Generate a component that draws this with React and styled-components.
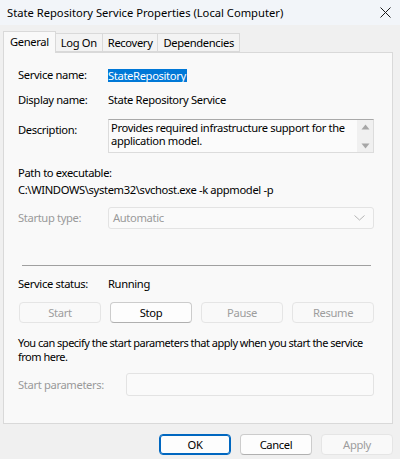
import React from 'react'
import styled, { createGlobalStyle } from 'styled-components'

const Global = createGlobalStyle`
  html, body { margin: 0; padding: 0; }
  body {
    background: #f0f0f0;
    font-family: "Noto Sans", "Open Sans", sans-serif;
    font-size: 11.2px;
    letter-spacing: -0.35px;
    color: #000;
  }
  * { box-sizing: border-box; }
`

const Window = styled.div`
  width: 400px;
  height: 459px;
  display: flex;
  flex-direction: column;
  background: #f0f0f0;
  overflow: hidden;
`

const TitleBar = styled.div`
  height: 25px;
  display: flex;
  align-items: center;
  justify-content: space-between;
  padding: 0 8px 0 7px;
  background: #f2f5f9;
  font-size: 11.2px;
  letter-spacing: 0;
`

const Close = styled.div`
  width: 14px;
  height: 14px;
  display: flex;
  align-items: center;
  justify-content: center;
`

const Body = styled.div`
  flex: 1;
  display: flex;
  flex-direction: column;
  padding: 6px 7px 0 3px;
`

const Tabs = styled.div`
  display: flex;
  align-items: flex-end;
  height: 21px;
  position: relative;
  z-index: 1;
`

const Tab = styled.div`
  height: ${p => (p.$active ? '22px' : '19px')};
  margin-bottom: ${p => (p.$active ? '-1px' : '0')};
  padding: 0 ${p => (p.$active ? '6px' : '5px')};
  padding-bottom: ${p => (p.$active ? '3px' : '0')};
  display: flex;
  align-items: center;
  border: 1px solid #d9d9d9;
  border-bottom: ${p => (p.$active ? 'none' : '1px solid #d9d9d9')};
  border-left: ${p => (p.$first || p.$active ? '1px solid #d9d9d9' : 'none')};
  background: ${p => (p.$active ? '#f9f9f9' : '#f3f3f3')};
`

const Panel = styled.div`
  height: 372px;
  border: 1px solid #d9d9d9;
  background: #f9f9f9;
  padding: 14px 18px 0 14px;
  display: flex;
  flex-direction: column;
`

const Row = styled.div`
  display: grid;
  grid-template-columns: ${p => p.$label || '90px'} 1fr;
  align-items: ${p => (p.$top ? 'start' : 'center')};
  margin-top: ${p => p.$mt || 0}px;
  line-height: 16px;
  min-height: 16px;
`

const Label = styled.div`
  color: ${p => (p.$dim ? '#9a9a9a' : '#000')};
  padding-top: ${p => p.$pt || 0}px;
`

const Selected = styled.span`
  background: #0078d7;
  color: #fff;
  line-height: 13px;
  padding: 0 1px 0 0;
  justify-self: start;
`

const TextArea = styled.div`
  height: 34px;
  border: 1px solid #dcdcdc;
  border-top-color: #a9a9a9;
  background: #fbfbfb;
  display: flex;
  line-height: 13px;
`

const AreaText = styled.div`
  flex: 1;
  padding: 1px 2px;
`

const Scroll = styled.div`
  width: 16px;
  background: #f0f0f0;
  display: flex;
  flex-direction: column;
  justify-content: space-between;
  align-items: center;
  padding: 4px 0 3px;
`

const Text = styled.div`
  margin-top: ${p => p.$mt || 0}px;
  line-height: ${p => p.$lh || 16}px;
`

const Note = styled.div`
  margin-top: 13px;
  line-height: 14px;
  font-size: 11px;
  letter-spacing: -0.5px;
  white-space: nowrap;
`

const Combo = styled.div`
  height: 22px;
  border: 1px solid #e3e3e3;
  border-radius: 3px;
  background: #fafafa;
  color: #9a9a9a;
  display: flex;
  align-items: center;
  justify-content: space-between;
  padding: 0 8px 0 4px;
`

const Input = styled.div`
  height: 23px;
  border: 1px solid #e3e3e3;
  border-radius: 3px;
  background: #fafafa;
`

const Separator = styled.div`
  height: 1px;
  background: #a0a0a0;
  margin: 36px 3px 0 4px;
`

const ButtonRow = styled.div`
  display: grid;
  grid-template-columns: repeat(4, 1fr);
  gap: 9px;
  margin-top: 10px;
  padding-left: 1px;
`

const Button = styled.div`
  height: 21px;
  width: ${p => p.$w || 'auto'};
  display: flex;
  align-items: center;
  justify-content: center;
  border-radius: 4px;
  border: 1px solid ${p => (p.$primary ? '#0067c0' : p.$disabled ? '#e5e5e5' : '#cccccc')};
  border-bottom-color: ${p => (p.$primary ? '#0067c0' : p.$disabled ? '#e5e5e5' : '#b0b0b0')};
  box-shadow: ${p => (p.$primary ? 'inset 0 0 0 1px #0067c0' : 'none')};
  background: ${p => (p.$disabled ? '#f9f9f9' : '#fdfdfd')};
  color: ${p => (p.$disabled ? '#9d9d9d' : '#000')};
`

const Footer = styled.div`
  display: flex;
  justify-content: flex-end;
  gap: 9px;
  margin-top: 10px;
`

const Arrow = ({ up }) => (
  <svg width="9" height="6" viewBox="0 0 9 6">
    <path d={up ? 'M0.5 5.5 L4.5 0.5 L8.5 5.5 Z' : 'M0.5 0.5 L4.5 5.5 L8.5 0.5 Z'} fill="#a6a6a6" />
  </svg>
)

export default function App() {
  return (
    <Window>
      <Global />
      <TitleBar>
        <span>State Repository Service Properties (Local Computer)</span>
        <Close>
          <svg width="11" height="11" viewBox="0 0 11 11">
            <path d="M0.5 0.5 L10.5 10.5 M10.5 0.5 L0.5 10.5" stroke="#1a1a1a" strokeWidth="1" />
          </svg>
        </Close>
      </TitleBar>
      <Body>
        <Tabs>
          <Tab $active $first>General</Tab>
          <Tab>Log On</Tab>
          <Tab>Recovery</Tab>
          <Tab>Dependencies</Tab>
        </Tabs>
        <Panel>
          <Row $mt={0}>
            <Label>Service name:</Label>
            <Selected>StateRepository</Selected>
          </Row>
          <Row $mt={9}>
            <Label>Display name:</Label>
            <div>State Repository Service</div>
          </Row>
          <Row $mt={11} $top>
            <Label $pt={3}>Description:</Label>
            <TextArea>
              <AreaText>Provides required infrastructure support for the application model.</AreaText>
              <Scroll>
                <Arrow up />
                <Arrow />
              </Scroll>
            </TextArea>
          </Row>
          <Text $mt={12}>Path to executable:</Text>
          <Text $mt={1}>C:\WINDOWS\system32\svchost.exe -k appmodel -p</Text>
          <Row $mt={9}>
            <Label $dim>Startup type:</Label>
            <Combo>
              <span>Automatic</span>
              <svg width="11" height="6" viewBox="0 0 11 6">
                <path d="M0.5 0.5 L5.5 5 L10.5 0.5" stroke="#b5b5b5" fill="none" />
              </svg>
            </Combo>
          </Row>
          <Separator />
          <Row $mt={10}>
            <Label>Service status:</Label>
            <div>Running</div>
          </Row>
          <ButtonRow>
            <Button $disabled>Start</Button>
            <Button>Stop</Button>
            <Button $disabled>Pause</Button>
            <Button $disabled>Resume</Button>
          </ButtonRow>
          <Note>
            You can specify the start parameters that apply when you start the service
            <br />
            from here.
          </Note>
          <Row $mt={9} $label="108px">
            <Label $dim>Start parameters:</Label>
            <Input />
          </Row>
        </Panel>
        <Footer>
          <Button $primary $w="72px">OK</Button>
          <Button $w="72px">Cancel</Button>
          <Button $disabled $w="72px">Apply</Button>
        </Footer>
      </Body>
    </Window>
  )
}
